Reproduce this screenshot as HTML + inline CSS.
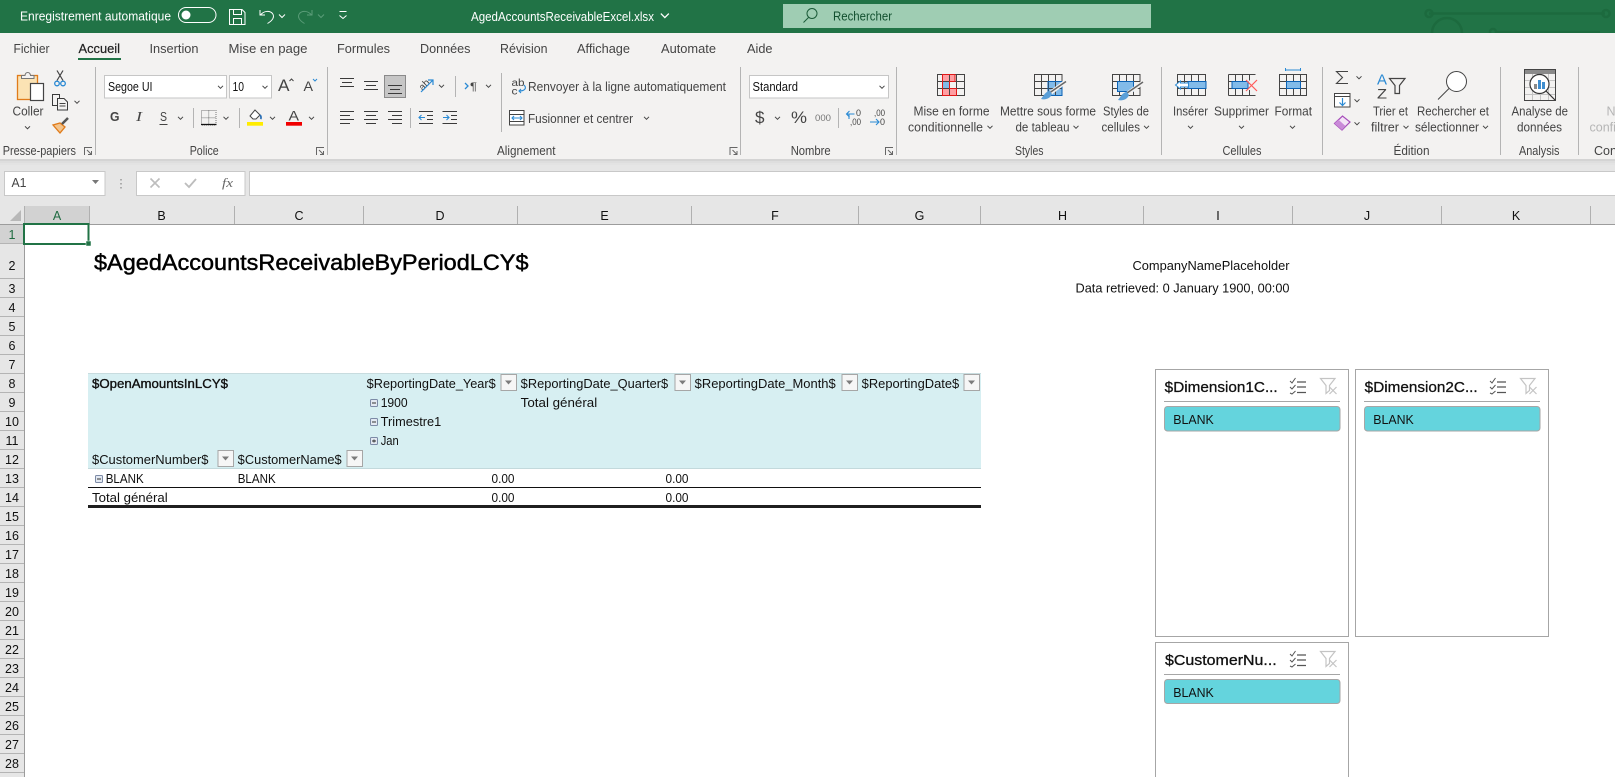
<!DOCTYPE html>
<html lang="fr"><head><meta charset="utf-8"><title>AgedAccountsReceivableExcel.xlsx</title>
<style>
html,body{margin:0;padding:0;background:#fff;width:1615px;height:777px;overflow:hidden}
svg{display:block}
text{font-family:"Liberation Sans",sans-serif;font-size:12.5px;fill:#444;white-space:pre}
.w text,text.w{fill:#fff}
.k text,text.k{fill:#111}
.g{fill:none;stroke:#444;stroke-width:1}
.sep{stroke:#b4b4b4;stroke-width:1}
.bl{stroke:#3a3a3a;stroke-width:1;fill:none}
</style></head><body>
<svg width="1615" height="777" viewBox="0 0 1615 777">
<defs>
<path id="c" d="M-2.500-1.200 0 1.300 2.500-1.200" fill="none" stroke="#444" stroke-width="1"/>
<path id="cw" d="M-3-1.500 0 1.500 3-1.500" fill="none" stroke="#fff" stroke-width="1"/>
<g id="lau" fill="none" stroke="#666" stroke-width="1"><path d="M.5 8V.5H8M3 3l4.500 4.500M7.500 4v3.500H4"/></g>
<g id="fb"><rect x=".5" y=".5" width="15.500" height="16" fill="#f6f6f6" stroke="#a6a6a6"/><path d="M4.500 6.500h7l-3.500 4z" fill="#7c7c7c"/></g>
<g id="mi"><rect x=".5" y=".5" width="7" height="7" rx="1" fill="#e3e9f2" stroke="#7c8aa6"/><path d="M2 4h4" stroke="#333"/></g>
<g id="ms" fill="none" stroke="#555" stroke-width="1"><path d="M0 3l2 2 3.500-5M0 9l2 2 3.500-4M0 15l2 1 3.500-3"/><path d="M7 4h9M7 9h9M7 14.500h9" stroke-width="1.300"/></g>
<g id="fx" fill="none" stroke="#c4c4c4" stroke-width="1.200"><path d="M.5.500h14.500l-5.500 7v5l-3.500 3v-8z"/><path d="M9.500 9l7 7M16.500 9l-7 7"/></g>
</defs>

<!-- Title bar -->
<rect width="1615" height="33" fill="#217346"/>
<g fill="none" stroke="#1c6a3e" stroke-width="2.500">
<path d="M1429 13.500H1605"/><circle cx="1429" cy="13.500" r="3.500"/><circle cx="1606" cy="13.500" r="3.500"/>
<circle cx="1447" cy="33" r="15"/><circle cx="1493" cy="32" r="3"/><path d="M1496 32H1600"/>
</g>
<g class="w">
<text x="20" y="20.500" textLength="151" lengthAdjust="spacingAndGlyphs">Enregistrement automatique</text>
<text x="471" y="21" textLength="183" lengthAdjust="spacingAndGlyphs">AgedAccountsReceivableExcel.xlsx</text>
</g>
<rect x="178.500" y="7.500" width="37.500" height="15" rx="7.500" fill="none" stroke="#fff"/>
<circle cx="186" cy="15" r="4.500" fill="#fff"/>
<g fill="none" stroke="#fff" stroke-width="1">
<path d="M229.500 9.500h12.500l3 3v12h-15.500z"/><path d="M233.500 9.500v5h8v-5M233.500 24.500v-6h8v6"/>
<path d="M260 10v5h5M260.500 15c3-4 9-5 12-1.500 2.500 3.500 0 7-5 10"/>
</g>
<use href="#cw" x="282" y="16"/>
<g fill="none" stroke="#5a9c78" stroke-width="1"><path d="M312 10v5h-5M311.500 15c-3-4-9-5-12-1.500-2.500 3.500 0 7 5 10"/><path d="M318 14.500l3 3 3-3"/></g>
<path d="M339.500 11.500h7M339.500 15.500l3.500 3 3.500-3" fill="none" stroke="#fff"/>
<use href="#cw" x="665" y="15.500" transform="translate(-221.600 -5.100) scale(1.333)"/>

<rect x="783" y="4" width="368" height="24" fill="#9fcdb3"/>
<circle cx="812" cy="13.500" r="5" fill="none" stroke="#1b5a38" stroke-width="1"/>
<path d="M808.500 17.500l-5 5" stroke="#1b5a38" stroke-width="1"/>
<text x="833" y="20.500" textLength="59" lengthAdjust="spacingAndGlyphs" style="fill:#12502f">Rechercher</text>

<!-- Ribbon -->
<rect y="33" width="1615" height="126" fill="#f3f2f1"/>
<rect y="159" width="1615" height="47" fill="#e6e6e6"/>
<rect y="159" width="1615" height="2" fill="#d4d4d4"/><rect y="161" width="1615" height="2" fill="#dedede"/><rect y="163" width="1615" height="2" fill="#e3e3e3"/>

<text x="13.500" y="53" textLength="36" lengthAdjust="spacingAndGlyphs">Fichier</text>
<text x="78.500" y="53" textLength="41.500" lengthAdjust="spacingAndGlyphs" style="fill:#222;stroke:#222;stroke-width:.2">Accueil</text>
<rect x="78" y="58" width="43" height="2" fill="#217346"/>
<text x="149.500" y="53" textLength="49" lengthAdjust="spacingAndGlyphs">Insertion</text>
<text x="228.500" y="53" textLength="79" lengthAdjust="spacingAndGlyphs">Mise en page</text>
<text x="337" y="53" textLength="53" lengthAdjust="spacingAndGlyphs">Formules</text>
<text x="420" y="53" textLength="50.500" lengthAdjust="spacingAndGlyphs">Données</text>
<text x="500" y="53" textLength="47.500" lengthAdjust="spacingAndGlyphs">Révision</text>
<text x="577" y="53" textLength="53" lengthAdjust="spacingAndGlyphs">Affichage</text>
<text x="661" y="53" textLength="55" lengthAdjust="spacingAndGlyphs">Automate</text>
<text x="747" y="53" textLength="25.500" lengthAdjust="spacingAndGlyphs">Aide</text>

<g class="sep">
<path d="M95.500 67v88M327.500 67v88M740.500 67v88M896.500 67v88M1161.500 67v88M1322.500 67v88M1500.500 67v88M1578.500 67v88"/>
<path d="M193.500 108v20M239.500 108v20M410.500 108v20M455.500 76v21M501.500 73v59M838.500 108v20"/>
</g>

<!-- Clipboard -->
<rect x="17.500" y="75.500" width="20" height="24" fill="#fbe3b4" stroke="#e07b1a" stroke-width="1.300"/>
<path d="M21.500 78.500v-3h3.500c.5-4 5-4 5.500 0h3.500v3z" fill="#f3f2f1" stroke="#777"/>
<rect x="30.500" y="83.500" width="13" height="17" fill="#fff" stroke="#444" stroke-width="1.200"/>
<text x="12.500" y="115.500" textLength="31" lengthAdjust="spacingAndGlyphs">Coller</text>
<use href="#c" x="27.500" y="127.500"/>
<path d="M57 70.500l6 10M63 70.500l-6 10" stroke="#444" stroke-width="1.200" fill="none"/>
<circle cx="57" cy="83.500" r="2.300" fill="none" stroke="#2a8ad4" stroke-width="1.300"/><circle cx="63" cy="83.500" r="2.300" fill="none" stroke="#2a8ad4" stroke-width="1.300"/>
<path class="bl" d="M52.500 94.500h7v11h-7z"/><path class="bl" d="M57.500 98.500h6.500l3.500 3.500v8h-10z" style="fill:#f3f2f1"/><path d="M59.500 103.500h6M59.500 106h6" stroke="#444"/>
<use href="#c" x="77" y="102"/>
<path d="M53 125l7 8 5-6-5-4z" fill="#f3c48c" stroke="#e07b1a" stroke-width="1.300"/>
<path d="M62 124l6-6" stroke="#555" stroke-width="2.500"/>
<text x="2.700" y="155" textLength="73.300" lengthAdjust="spacingAndGlyphs">Presse-papiers</text>
<use href="#lau" x="84" y="147"/>

<!-- Font -->
<rect x="104.500" y="75.500" width="122" height="22.500" fill="#fff" stroke="#c6c6c6"/>
<rect x="229.500" y="75.500" width="42" height="22.500" fill="#fff" stroke="#c6c6c6"/>
<text x="108" y="91" textLength="44.500" lengthAdjust="spacingAndGlyphs" class="k">Segoe UI</text>
<text x="232.500" y="91" textLength="11.500" lengthAdjust="spacingAndGlyphs" class="k">10</text>
<use href="#c" x="220.500" y="87"/><use href="#c" x="265" y="87"/>
<text x="278" y="91" textLength="11.500" lengthAdjust="spacingAndGlyphs" style="font-size:17px">A</text>
<path d="M289.500 81l2-2 2 2" fill="none" stroke="#444"/>
<text x="303.500" y="91" textLength="9.500" lengthAdjust="spacingAndGlyphs" style="font-size:14px">A</text>
<path d="M313 79l2 2 2-2" fill="none" stroke="#2a8ad4"/>
<text x="110" y="121" textLength="9.500" lengthAdjust="spacingAndGlyphs" style="font-size:13px;font-weight:bold">G</text>
<text x="136" y="121" textLength="6" lengthAdjust="spacingAndGlyphs" style="font-family:'Liberation Serif',serif;font-size:14px;font-style:italic">I</text>
<text x="160" y="121" textLength="7" lengthAdjust="spacingAndGlyphs" style="font-size:13px">S</text>
<path d="M159.500 124.500h8" stroke="#444"/>
<use href="#c" x="180.500" y="118"/>
<path d="M201.500 110.500h14.500v14.500h-14.500zM208.700 110.500v14.500M201.500 117.700h14.500" fill="none" stroke="#777" stroke-dasharray="1 1"/>
<path d="M201 124.500h15.500" stroke="#111" stroke-width="1.300"/>
<use href="#c" x="226" y="118"/>
<path d="M250 116l5-6 5 5-4 4h-3z" fill="#fff" stroke="#444"/><path d="M260 115c1 1 1.500 3 .5 4" stroke="#2a6fb5" stroke-width="1.800" fill="none"/>
<rect x="247" y="122" width="16" height="3.700" fill="#ffec00"/>
<use href="#c" x="272.500" y="118"/>
<text x="288.500" y="120.500" textLength="10.500" lengthAdjust="spacingAndGlyphs" style="font-size:14px">A</text>
<rect x="286" y="122" width="16" height="3.700" fill="#f00000"/>
<use href="#c" x="311.500" y="118"/>
<text x="189.700" y="155" textLength="29" lengthAdjust="spacingAndGlyphs">Police</text>
<use href="#lau" x="316" y="147"/>

<!-- Alignment -->
<rect x="384.500" y="75.500" width="21" height="22" fill="#c6c6c6" stroke="#8a8a8a"/>
<path class="bl" d="M340 78.500h14M342 82.500h10M340 86.500h14M364 81.500h14M366 85.500h10M364 89.500h14M388 85.500h14M390 89.500h10M388 93.500h14"/>
<path class="bl" d="M340 111.500h14M340 115.500h10M340 119.500h14M340 123.500h10M364 111.500h14M366 115.500h10M364 119.500h14M366 123.500h10M388 111.500h14M392 115.500h10M388 119.500h14M392 123.500h10"/>
<text x="418" y="88" transform="rotate(-45 424 84)" textLength="11" lengthAdjust="spacingAndGlyphs" style="font-size:10px">ab</text>
<path d="M421 92l12-12M428 80h5v5" fill="none" stroke="#2a8ad4" stroke-width="1.200"/>
<use href="#c" x="441.500" y="86"/>
<path d="M465 83l3 3-3 3" fill="none" stroke="#2a8ad4" stroke-width="1.300"/>
<text x="470" y="90" textLength="7" lengthAdjust="spacingAndGlyphs" style="font-size:11px">¶</text>
<use href="#c" x="488.500" y="86"/>
<path class="bl" d="M419 111.500h14M427 115.500h6M427 119.500h6M419 123.500h14M442.500 111.500h14.500M451 115.500h6M451 119.500h6M442.500 123.500h14.500"/>
<path d="M419 117.500h6M421.500 115l-2.500 2.500 2.500 2.500M443 117.500h6M446.500 115l2.500 2.500-2.500 2.500" fill="none" stroke="#2a8ad4" stroke-width="1.100"/>
<text x="511.500" y="86" textLength="13" lengthAdjust="spacingAndGlyphs" style="font-size:10px">ab</text>
<text x="511.500" y="94.500" textLength="6" lengthAdjust="spacingAndGlyphs" style="font-size:10px">c</text>
<path d="M524 85c3 3 1 6-5 6M521 89l-2 2 2 2" fill="none" stroke="#2a8ad4" stroke-width="1.100"/>
<text x="528" y="91" textLength="198" lengthAdjust="spacingAndGlyphs">Renvoyer à la ligne automatiquement</text>
<rect x="509.500" y="110.500" width="14.500" height="14.500" fill="#fff" stroke="#444"/><path d="M510 114.500h14M510 121.500h14" stroke="#444"/>
<path d="M512 118h10M514 116l-2 2 2 2M520 116l2 2-2 2" fill="none" stroke="#2a8ad4" stroke-width="1.100"/>
<text x="528" y="123" textLength="105" lengthAdjust="spacingAndGlyphs">Fusionner et centrer</text>
<use href="#c" x="646.500" y="118"/>
<text x="497" y="155" textLength="58.500" lengthAdjust="spacingAndGlyphs">Alignement</text>
<use href="#lau" x="729.500" y="147"/>

<!-- Number -->
<rect x="749.500" y="75.500" width="139" height="22.500" fill="#fff" stroke="#c6c6c6"/>
<text x="752.500" y="91" textLength="45.500" lengthAdjust="spacingAndGlyphs" class="k">Standard</text>
<use href="#c" x="882" y="87"/>
<text x="755" y="123" textLength="9.500" lengthAdjust="spacingAndGlyphs" style="font-size:17px">$</text>
<use href="#c" x="777.500" y="118"/>
<text x="791" y="123" textLength="16" lengthAdjust="spacingAndGlyphs" style="font-size:17px">%</text>
<text x="815" y="121" textLength="16" lengthAdjust="spacingAndGlyphs" style="font-size:9.500px;fill:#777">000</text>
<text x="856" y="116" textLength="5" lengthAdjust="spacingAndGlyphs" style="font-size:9px">0</text>
<text x="850" y="125" textLength="11" lengthAdjust="spacingAndGlyphs" style="font-size:9px">,00</text>
<text x="874" y="116" textLength="11" lengthAdjust="spacingAndGlyphs" style="font-size:9px">,00</text>
<text x="880" y="125" textLength="5" lengthAdjust="spacingAndGlyphs" style="font-size:9px">0</text>
<path d="M846.500 114h8M849.500 111l-3 3 3 3M849 114v5M870 122h9M876 119l3 3-3 3" fill="none" stroke="#2a8ad4" stroke-width="1.100"/>
<text x="790.700" y="155" textLength="40" lengthAdjust="spacingAndGlyphs">Nombre</text>
<use href="#lau" x="885" y="147"/>

<!-- Styles -->
<rect x="942" y="74.500" width="13" height="7" fill="#ff9ea2"/><rect x="942" y="81.500" width="7.500" height="7" fill="#82bbe9"/><rect x="942" y="88.500" width="14.500" height="7" fill="#ff9ea2"/>
<path d="M937.500 74.500h27v21h-27zM937.500 81.500h27M937.500 88.500h27M942.500 74.500v21M949.500 74.500v21M956.500 74.500v21" fill="none" stroke="#444"/>
<path d="M942.500 74.500h12.500v7h-5.500v7h7v7h-14z" fill="none" stroke="#e01818"/>
<text x="913.500" y="115.500" textLength="76" lengthAdjust="spacingAndGlyphs">Mise en forme</text>
<text x="908" y="131.500" textLength="75" lengthAdjust="spacingAndGlyphs">conditionnelle</text>
<use href="#c" x="990" y="127"/>
<rect x="1048" y="81.500" width="14" height="14" fill="#82bbe9"/>
<path d="M1034.500 74.500h27.500v21h-27.500zM1034.500 81.500h27.500M1034.500 88.500h27.500M1041.500 74.500v21M1048.500 74.500v21M1055.500 74.500v21" fill="none" stroke="#444"/>
<path d="M1048 81.500h14v14h-14z" fill="none" stroke="#0b62b5"/>
<path d="M1065 82l-16 12" stroke="#f3f2f1" stroke-width="4"/><path d="M1066 81.500l-16 11" stroke="#666" stroke-width="1.500"/>
<path d="M1050 91c-4 0-6 4-9 8 4 1 9 0 11-5z" fill="#5a9fd8"/>
<text x="1000" y="115.500" textLength="96" lengthAdjust="spacingAndGlyphs">Mettre sous forme</text>
<text x="1015.500" y="131.500" textLength="54" lengthAdjust="spacingAndGlyphs">de tableau</text>
<use href="#c" x="1076" y="127"/>
<text x="1015" y="155" textLength="28.500" lengthAdjust="spacingAndGlyphs">Styles</text>
<rect x="1117" y="81.500" width="16.500" height="10" fill="#82bbe9"/>
<path d="M1112.500 74.500h27.500v21h-27.500zM1112.500 81.500h27.500M1112.500 88.500h27.500M1119.500 74.500v21M1126.500 74.500v21M1133.500 74.500v21" fill="none" stroke="#444"/>
<path d="M1117.500 81.500h16v10h-16z" fill="#82bbe9" stroke="#0b62b5"/>
<path d="M1142 83l-15 11" stroke="#f3f2f1" stroke-width="4"/><path d="M1143 82l-16 11" stroke="#666" stroke-width="1.500"/>
<path d="M1127 92c-4 0-6 4-9 8 4 1 9 0 11-5z" fill="#5a9fd8"/>
<text x="1103" y="115.500" textLength="46" lengthAdjust="spacingAndGlyphs">Styles de</text>
<text x="1101.500" y="131.500" textLength="38.500" lengthAdjust="spacingAndGlyphs">cellules</text>
<use href="#c" x="1146.500" y="127"/>

<!-- Cells -->
<path d="M1177.500 74.500h28v21h-28zM1177.500 81.500h28M1177.500 88.500h28M1184.500 74.500v21M1191.500 74.500v21M1198.500 74.500v21" fill="none" stroke="#444"/>
<rect x="1188" y="81.500" width="18" height="7" fill="#82bbe9" stroke="#0b62b5"/>
<path d="M1175.500 85l5-4v2h8v4h-8v2z" fill="#fff" stroke="#2a8ad4"/>
<text x="1173" y="115.500" textLength="35" lengthAdjust="spacingAndGlyphs">Insérer</text>
<use href="#c" x="1190.500" y="127"/>
<path d="M1228.500 74.500h27M1228.500 95.500h27M1228.500 74.500v21M1235.500 74.500v21M1242.500 74.500v21M1249.500 74.500v6M1249.500 90v5.500M1228.500 81.500h10M1228.500 88.500h10" fill="none" stroke="#444"/>
<rect x="1232" y="81.500" width="16" height="7" fill="#82bbe9" stroke="#0b62b5"/>
<path d="M1246 80l11 11M1257 80l-11 11" stroke="#ff5a5a" stroke-width="1.200"/>
<text x="1214" y="115.500" textLength="55" lengthAdjust="spacingAndGlyphs">Supprimer</text>
<use href="#c" x="1241.500" y="127"/>
<path d="M1279.500 74.500h27v21h-27zM1279.500 81.500h27M1279.500 88.500h27M1286.500 74.500v21M1293.500 74.500v21M1300.500 74.500v21" fill="none" stroke="#444"/>
<rect x="1286.500" y="81.500" width="14" height="7" fill="#82bbe9" stroke="#0b62b5"/>
<path d="M1285.500 68v3M1300.500 68v3M1285.500 70h15" stroke="#2a8ad4" fill="none"/>
<text x="1274.500" y="115.500" textLength="37.500" lengthAdjust="spacingAndGlyphs">Format</text>
<use href="#c" x="1292.500" y="127"/>
<text x="1222.500" y="155" textLength="39" lengthAdjust="spacingAndGlyphs">Cellules</text>

<!-- Editing -->
<path d="M1348 71.500h-11.500l6 6-6 6h11.500" fill="none" stroke="#444" stroke-width="1.100"/>
<use href="#c" x="1359" y="77.500"/>
<rect x="1334.500" y="93.500" width="15.500" height="13.500" fill="#fff" stroke="#444"/><path d="M1335 96.500h15" stroke="#444"/>
<path d="M1342.500 98v7M1339.500 102.500l3 3 3-3" fill="none" stroke="#2a8ad4" stroke-width="1.200"/>
<use href="#c" x="1357" y="100.500"/>
<path d="M1334.500 123.500l8-7.500 7.500 6-8 8z" fill="#f3e3f6" stroke="#a64dba" stroke-width="1.200"/><path d="M1334.500 123.500l4-3.800 7 6.300-3.500 4z" fill="#c98ad8"/>
<use href="#c" x="1357" y="123.500"/>
<text x="1377" y="84.500" textLength="10" lengthAdjust="spacingAndGlyphs" style="font-size:15px;fill:#2a8ad4">A</text>
<text x="1377" y="98.500" textLength="10" lengthAdjust="spacingAndGlyphs" style="font-size:14px">Z</text>
<path d="M1389.500 78.500h15.500l-5.500 7v8h-4.500v-8z" fill="none" stroke="#444" stroke-width="1.200"/>
<text x="1373" y="115.500" textLength="35" lengthAdjust="spacingAndGlyphs">Trier et</text>
<text x="1371" y="131.500" textLength="28" lengthAdjust="spacingAndGlyphs">filtrer</text>
<use href="#c" x="1406" y="127"/>
<circle cx="1456.500" cy="81.500" r="10" fill="#fff" stroke="#444"/><path d="M1449 88.500l-11 11" stroke="#444"/>
<text x="1417" y="115.500" textLength="72" lengthAdjust="spacingAndGlyphs">Rechercher et</text>
<text x="1415" y="131.500" textLength="64" lengthAdjust="spacingAndGlyphs">sélectionner</text>
<use href="#c" x="1485.500" y="127"/>
<text x="1393.500" y="155" textLength="36" lengthAdjust="spacingAndGlyphs">Édition</text>

<!-- Analysis -->
<rect x="1524.500" y="69.500" width="31" height="31" fill="#f3f2f1" stroke="#444"/>
<rect x="1525" y="70" width="30" height="4" fill="#8a8a8a"/>
<path d="M1525 80.500h30M1525 87.500h30M1525 94.500h30M1532.500 74v26M1540.500 74v26M1548.500 74v26" stroke="#c4c4c4"/>
<circle cx="1539.500" cy="84" r="9.500" fill="#fff" stroke="#333" stroke-width="1.200"/>
<rect x="1534" y="84" width="3" height="5" fill="#8a8a8a"/><rect x="1538" y="80" width="3" height="9" fill="#3f8ecf"/><rect x="1542" y="82" width="3" height="7" fill="#3f8ecf"/>
<path d="M1546 91l9 9" stroke="#333" stroke-width="1.200"/>
<text x="1511.500" y="115.500" textLength="56.500" lengthAdjust="spacingAndGlyphs">Analyse de</text>
<text x="1517" y="131.500" textLength="45" lengthAdjust="spacingAndGlyphs">données</text>
<text x="1519" y="155" textLength="40.500" lengthAdjust="spacingAndGlyphs">Analysis</text>
<text x="1606.500" y="115.500" style="fill:#b5b5b5">N</text>
<text x="1589.500" y="131.500" style="fill:#b5b5b5">confi</text>
<text x="1594" y="155">Con</text>

<!-- Formula bar -->
<rect x="4.500" y="171.500" width="100.500" height="24" fill="#fff" stroke="#c8c8c8"/>
<text x="11.500" y="187" textLength="15" lengthAdjust="spacingAndGlyphs">A1</text>
<path d="M92 180h7l-3.500 4z" fill="#777"/>
<path d="M121 179v1.500M121 183v1.500M121 187v1.500" stroke="#999" stroke-width="1.500"/>
<rect x="136.500" y="171.500" width="108.500" height="24" fill="#fff" stroke="#c8c8c8"/>
<path d="M150.500 178.500l9 9M159.500 178.500l-9 9" stroke="#bdbdbd" stroke-width="1.600"/>
<path d="M185 183l4 4 7-8" fill="none" stroke="#bdbdbd" stroke-width="1.800"/>
<text x="222" y="187" textLength="11" lengthAdjust="spacingAndGlyphs" style="font-family:'Liberation Serif',serif;font-style:italic;font-size:13px;fill:#666">fx</text>
<rect x="249.500" y="171.500" width="1370" height="24" fill="#fff" stroke="#c8c8c8"/>

<!-- Column headers -->
<rect y="206" width="1615" height="18" fill="#e6e6e6"/>
<rect x="24" y="206" width="65" height="18" fill="#d2d2d2"/>
<path d="M21 210v11H10z" fill="#b8b8b8"/>
<path d="M24.500 206v18M89.500 206v18M234.500 206v18M363.500 206v18M517.500 206v18M691.500 206v18M858.500 206v18M980.500 206v18M1143.500 206v18M1292.500 206v18M1441.500 206v18M1590.500 206v18" stroke="#b0b0b0"/>
<path d="M0 224.500h1615" stroke="#9c9c9c"/>
<g text-anchor="middle">
<text x="57" y="220" style="fill:#1f6b41">A</text>
<text x="161.500" y="220" class="k">B</text><text x="299" y="220" class="k">C</text><text x="440" y="220" class="k">D</text><text x="604.500" y="220" class="k">E</text><text x="775" y="220" class="k">F</text><text x="919.500" y="220" class="k">G</text><text x="1062.500" y="220" class="k">H</text><text x="1218" y="220" class="k">I</text><text x="1367" y="220" class="k">J</text><text x="1516" y="220" class="k">K</text>
</g>

<!-- Row headers -->
<rect y="225" width="24" height="552" fill="#e6e6e6"/>
<rect y="225" width="24" height="18" fill="#d2d2d2"/>
<path d="M24.500 224v553" stroke="#9c9c9c"/>
<path d="M0 243.500h24M0 278.500h24M0 297.500h24M0 316.500h24M0 335.500h24M0 354.500h24M0 373.500h24M0 392.500h24M0 411.500h24M0 430.500h24M0 449.500h24M0 468.500h24M0 487.500h24M0 506.500h24M0 525.500h24M0 544.500h24M0 563.500h24M0 582.500h24M0 601.500h24M0 620.500h24M0 639.500h24M0 658.500h24M0 677.500h24M0 696.500h24M0 715.500h24M0 734.500h24M0 753.500h24M0 772.500h24" stroke="#b4b4b4"/>
<g text-anchor="middle">
<text x="12" y="239" style="fill:#1f6b41">1</text>
<text x="12" y="270" class="k">2</text><text x="12" y="293" class="k">3</text><text x="12" y="312" class="k">4</text><text x="12" y="331" class="k">5</text><text x="12" y="350" class="k">6</text><text x="12" y="369" class="k">7</text><text x="12" y="388" class="k">8</text><text x="12" y="407" class="k">9</text><text x="12" y="426" class="k">10</text><text x="12" y="445" class="k">11</text><text x="12" y="464" class="k">12</text><text x="12" y="483" class="k">13</text><text x="12" y="502" class="k">14</text><text x="12" y="521" class="k">15</text><text x="12" y="540" class="k">16</text><text x="12" y="559" class="k">17</text><text x="12" y="578" class="k">18</text><text x="12" y="597" class="k">19</text><text x="12" y="616" class="k">20</text><text x="12" y="635" class="k">21</text><text x="12" y="654" class="k">22</text><text x="12" y="673" class="k">23</text><text x="12" y="692" class="k">24</text><text x="12" y="711" class="k">25</text><text x="12" y="730" class="k">26</text><text x="12" y="749" class="k">27</text><text x="12" y="768" class="k">28</text>
</g>

<!-- Selection -->
<rect x="24" y="224" width="64.500" height="20" fill="#fff" stroke="#217346" stroke-width="2"/>
<rect x="86" y="241" width="5" height="5" fill="#217346" stroke="#fff" stroke-width=".5"/>

<!-- Sheet text -->
<text x="94" y="270" textLength="434.500" lengthAdjust="spacingAndGlyphs" style="font-size:22px;fill:#000;stroke:#000;stroke-width:.45">$AgedAccountsReceivableByPeriodLCY$</text>
<text x="1132.500" y="270" textLength="157" lengthAdjust="spacingAndGlyphs" class="k">CompanyNamePlaceholder</text>
<text x="1075.500" y="292.500" textLength="214" lengthAdjust="spacingAndGlyphs" class="k">Data retrieved: 0 January 1900, 00:00</text>

<!-- Pivot -->
<rect x="88" y="373" width="893" height="95" fill="#d7eff2"/>
<path d="M88 373.500h893" stroke="#c8dcdf"/><path d="M88 468.500h893" stroke="#c3d9dc"/>
<path d="M88 487.500h893" stroke="#111"/>
<rect x="88" y="505" width="893" height="3" fill="#1f1f1f"/>
<g class="k">
<text x="92" y="388" textLength="136" lengthAdjust="spacingAndGlyphs" style="font-size:12.500px;stroke:#111;stroke-width:.35">$OpenAmountsInLCY$</text>
<text x="366.700" y="388" textLength="129" lengthAdjust="spacingAndGlyphs">$ReportingDate_Year$</text>
<text x="520.700" y="388" textLength="147.500" lengthAdjust="spacingAndGlyphs">$ReportingDate_Quarter$</text>
<text x="694.700" y="388" textLength="141" lengthAdjust="spacingAndGlyphs">$ReportingDate_Month$</text>
<text x="861.700" y="388" textLength="97.500" lengthAdjust="spacingAndGlyphs">$ReportingDate$</text>
<text x="380.700" y="407" textLength="27" lengthAdjust="spacingAndGlyphs">1900</text>
<text x="520.700" y="407" textLength="76.500" lengthAdjust="spacingAndGlyphs">Total général</text>
<text x="380.700" y="426" textLength="60.500" lengthAdjust="spacingAndGlyphs">Trimestre1</text>
<text x="380.700" y="445" textLength="18" lengthAdjust="spacingAndGlyphs">Jan</text>
<text x="92" y="464" textLength="116.500" lengthAdjust="spacingAndGlyphs">$CustomerNumber$</text>
<text x="237.700" y="464" textLength="104" lengthAdjust="spacingAndGlyphs">$CustomerName$</text>
<text x="105.700" y="483" textLength="38" lengthAdjust="spacingAndGlyphs">BLANK</text>
<text x="237.700" y="483" textLength="38" lengthAdjust="spacingAndGlyphs">BLANK</text>
<text x="491.500" y="483" textLength="23" lengthAdjust="spacingAndGlyphs">0.00</text>
<text x="665.500" y="483" textLength="23" lengthAdjust="spacingAndGlyphs">0.00</text>
<text x="92" y="502" textLength="75.700" lengthAdjust="spacingAndGlyphs">Total général</text>
<text x="491.500" y="502" textLength="23" lengthAdjust="spacingAndGlyphs">0.00</text>
<text x="665.500" y="502" textLength="23" lengthAdjust="spacingAndGlyphs">0.00</text>
</g>
<use href="#fb" x="500.500" y="374"/><use href="#fb" x="674.500" y="374"/><use href="#fb" x="841.500" y="374"/><use href="#fb" x="963.500" y="374"/>
<use href="#fb" x="217.500" y="450"/><use href="#fb" x="346.500" y="450"/>
<use href="#mi" x="370" y="399"/><use href="#mi" x="370" y="418"/><use href="#mi" x="370" y="437"/><path d="M374 439.500v3" stroke="#333"/>
<use href="#mi" x="95" y="475"/>

<!-- Slicers -->
<g fill="#fff" stroke="#a6a6a6" stroke-width="1">
<rect x="1155.500" y="369.500" width="193" height="267"/>
<rect x="1355.500" y="369.500" width="193" height="267"/>
<rect x="1155.500" y="642.500" width="193" height="150"/>
</g>
<path d="M1164 401.500h176M1364 401.500h176M1164 674.500h176" stroke="#a6a6a6"/>
<g fill="#64d4dd" stroke="#a6a6a6">
<rect x="1164.500" y="406.500" width="175.500" height="24.500" rx="3"/>
<rect x="1364.500" y="406.500" width="175.500" height="24.500" rx="3"/>
<rect x="1164.500" y="679.500" width="175.500" height="24" rx="3"/>
</g>
<g class="k">
<text x="1164.700" y="392" textLength="113" lengthAdjust="spacingAndGlyphs" style="font-size:15px;stroke:#111;stroke-width:.3">$Dimension1C...</text>
<text x="1364.700" y="392" textLength="113" lengthAdjust="spacingAndGlyphs" style="font-size:15px;stroke:#111;stroke-width:.3">$Dimension2C...</text>
<text x="1165" y="665" textLength="111.700" lengthAdjust="spacingAndGlyphs" style="font-size:15px;stroke:#111;stroke-width:.3">$CustomerNu...</text>
<text x="1173.300" y="424" textLength="40.500" lengthAdjust="spacingAndGlyphs" style="font-size:13px">BLANK</text>
<text x="1373.300" y="424" textLength="40.500" lengthAdjust="spacingAndGlyphs" style="font-size:13px">BLANK</text>
<text x="1173.300" y="697" textLength="40.500" lengthAdjust="spacingAndGlyphs" style="font-size:13px">BLANK</text>
</g>
<use href="#ms" x="1290" y="378"/><use href="#ms" x="1490" y="378"/><use href="#ms" x="1290" y="651"/>
<use href="#fx" x="1320" y="378"/><use href="#fx" x="1520" y="378"/><use href="#fx" x="1320" y="651"/>
</svg>
</body></html>
